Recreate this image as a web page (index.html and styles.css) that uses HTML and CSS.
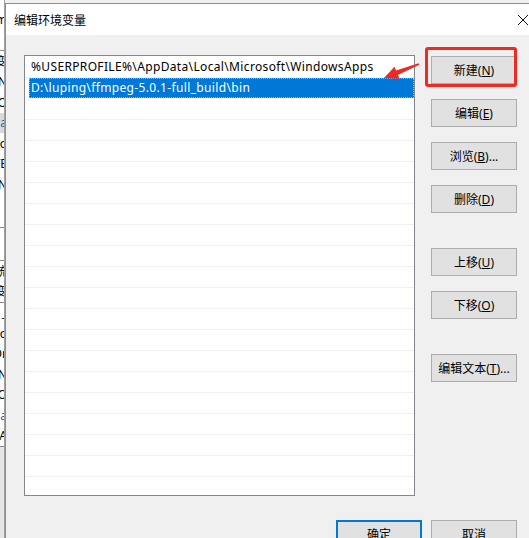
FILE: index.html
```html
<!DOCTYPE html>
<html lang="zh-CN">
<head>
    <meta charset="UTF-8">
    <meta name="viewport" content="width=device-width, initial-scale=1.0">
    <title>编辑环境变量</title>
    <link rel="stylesheet" href="styles.css">
</head>
<body>

    <!-- Window behind the dialog: only its right edge is visible -->
    <div class="behind">
        <div class="behind-line">m</div>
        <div class="behind-line rule"></div>
        <div class="behind-line">变</div>
        <div class="behind-line">EN</div>
        <div class="behind-line">O</div>
        <div class="behind-line hl">Pa</div>
        <div class="behind-line">Po</div>
        <div class="behind-line">TE</div>
        <div class="behind-line">TN</div>
        <div class="behind-line tall rule"></div>
        <div class="behind-line tall rule"></div>
        <div class="behind-line">统</div>
        <div class="behind-line rule">变</div>
        <div class="behind-line">_</div>
        <div class="behind-line">Co</div>
        <div class="behind-line">Dr</div>
        <div class="behind-line">N</div>
        <div class="behind-line">O</div>
        <div class="behind-line blue">Pa</div>
        <div class="behind-line">PA</div>
        <div class="behind-foot"></div>
    </div>

    <!-- Edit environment variable dialog -->
    <div class="dialog" role="dialog" aria-label="编辑环境变量">
        <div class="titlebar">
            <span class="title">编辑环境变量</span>
            <svg class="close" width="12" height="12" viewBox="0 0 12 12" aria-label="关闭">
                <path d="M1 1 L11 11 M11 1 L1 11" stroke="#111" stroke-width="1"/>
            </svg>
        </div>

        <div class="dialog-body">
            <div class="listbox" role="listbox">
                <div class="row"><span class="cell">%USERPROFILE%\AppData\Local\Microsoft\WindowsApps</span></div>
                <div class="row selected" aria-selected="true"><span class="cell">D:\luping\ffmpeg-5.0.1-full_build\bin</span></div>
                <div class="row"><span class="cell"></span></div>
                <div class="row"><span class="cell"></span></div>
                <div class="row"><span class="cell"></span></div>
                <div class="row"><span class="cell"></span></div>
                <div class="row"><span class="cell"></span></div>
                <div class="row"><span class="cell"></span></div>
                <div class="row"><span class="cell"></span></div>
                <div class="row"><span class="cell"></span></div>
                <div class="row"><span class="cell"></span></div>
                <div class="row"><span class="cell"></span></div>
                <div class="row"><span class="cell"></span></div>
                <div class="row"><span class="cell"></span></div>
                <div class="row"><span class="cell"></span></div>
                <div class="row"><span class="cell"></span></div>
                <div class="row"><span class="cell"></span></div>
                <div class="row"><span class="cell"></span></div>
                <div class="row"><span class="cell"></span></div>
                <div class="row"><span class="cell"></span></div>
                <div class="row"><span class="cell"></span></div>
            </div>

            <div class="actions">
                <div class="group">
                    <button class="btn">新建(<u>N</u>)</button>
                    <button class="btn">编辑(<u>E</u>)</button>
                    <button class="btn">浏览(<u>B</u>)...</button>
                    <button class="btn">删除(<u>D</u>)</button>
                </div>
                <div class="group">
                    <button class="btn">上移(<u>U</u>)</button>
                    <button class="btn">下移(<u>O</u>)</button>
                </div>
                <div class="group">
                    <button class="btn">编辑文本(<u>T</u>)...</button>
                </div>
            </div>

            <div class="footer">
                <button class="btn default">确定</button>
                <button class="btn">取消</button>
            </div>
        </div>
    </div>

    <!-- Annotation drawn over the screenshot -->
    <div class="mark"></div>
    <svg class="arrow" width="529" height="100" viewBox="0 0 529 100">
        <polygon points="384,78 399.5,78.8 397.9,75.1 419.3,64.8 418.6,63.2 396.1,70.5 394.5,66.8" fill="#ec2a22"/>
    </svg>

</body>
</html>
```

FILE: styles.css
```css
body {
    margin: 0;
    width: 529px;
    height: 538px;
    overflow: hidden;
    position: relative;
    background: #f0f0f0;
    font-family: "Noto Sans", "Noto Sans CJK SC", sans-serif;
    font-size: 12px;
    color: #000;
}

/* window behind */
.behind {
    width: 5px;
    height: 538px;
    padding-top: 9px;
    box-sizing: border-box;
    overflow: hidden;
    display: flex;
    flex-direction: column;
    background: #fff;
    border-right: 1px solid #a0a0a0;
}

.behind-line {
    height: 20.5px;
    flex: none;
    display: flex;
    justify-content: flex-end;
    align-items: center;
    white-space: nowrap;
    margin-right: -3px;
    font-size: 12px;
}

.behind-line.tall {
    height: 32px;
}

.behind-line.rule {
    border-bottom: 1px solid #8a8a8a;
}

.behind-line.hl {
    background: #d9d9d9;
    color: #1f5fa8;
}

.behind-line.blue {
    color: #1f5fa8;
}

.behind-foot {
    flex: 1;
    background: #e6e6e6;
    border-top: 1px solid #8a8a8a;
}

/* dialog */
.dialog {
    position: absolute;
    left: 5px;
    top: 3px;
    width: 540px;
    height: 560px;
    box-sizing: border-box;
    border: 1px solid #8f8f8f;
    background: #f0f0f0;
}

.titlebar {
    height: 31px;
    background: #fff;
    display: flex;
    align-items: center;
    justify-content: space-between;
    padding: 0 15px 0 8px;
}

.title {
    font-size: 12px;
    color: #000;
}

.dialog-body {
    display: grid;
    grid-template-columns: 391px 86px;
    column-gap: 16px;
    padding: 20px 0 0 18px;
}

.listbox {
    height: 441px;
    box-sizing: border-box;
    border: 1px solid #828790;
    background: #fff;
    padding-top: 1px;
    overflow: hidden;
}

.row {
    height: 21px;
    box-sizing: border-box;
    border-bottom: 1px solid #f0f0f0;
    padding-left: 4px;
    display: flex;
}

.cell {
    flex: 1;
    padding-left: 2px;
    line-height: 20px;
    white-space: nowrap;
    letter-spacing: 0.35px;
}

.row.selected {
    border-bottom-color: #fff;
}

.row.selected .cell {
    background: #0078d7;
    color: #fff;
    outline: 1px dotted #e6a15e;
    outline-offset: -1px;
}

.actions {
    display: flex;
    flex-direction: column;
    gap: 35px;
    padding-top: 1px;
}

.group {
    display: flex;
    flex-direction: column;
    gap: 15px;
}

.btn {
    height: 28px;
    width: 86px;
    box-sizing: border-box;
    border: 1px solid #adadad;
    background: #e1e1e1;
    font-family: "Noto Sans", "Noto Sans CJK SC", sans-serif;
    font-size: 12px;
    color: #000;
    padding: 0;
}

.btn.default {
    border: 2px solid #0078d7;
}

.footer {
    grid-column: 1 / -1;
    display: flex;
    justify-content: flex-end;
    gap: 9px;
    margin-top: 24px;
}

/* annotation */
.mark {
    position: absolute;
    left: 425px;
    top: 47px;
    width: 92px;
    height: 40px;
    box-sizing: border-box;
    border: 3px solid #ee2a24;
    border-radius: 3px;
}

.arrow {
    position: absolute;
    left: 0;
    top: 0;
}
```
